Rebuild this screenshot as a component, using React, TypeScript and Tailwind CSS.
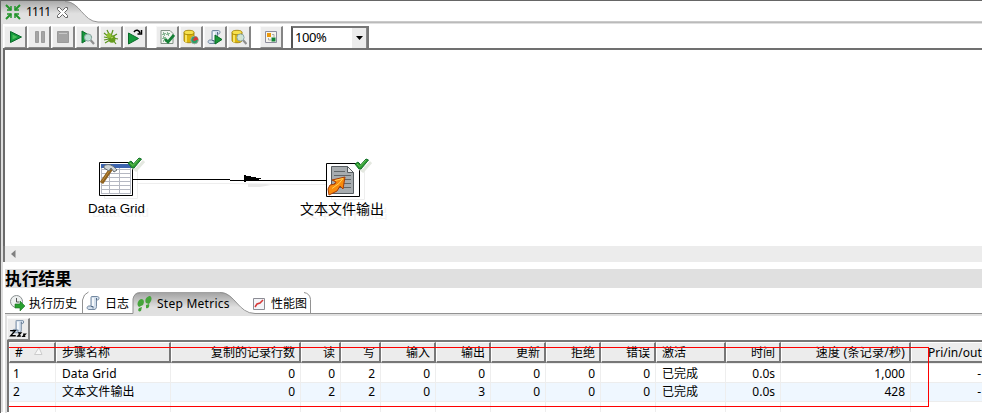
import React from "react";

const Play = () => <path d="M3 2v12l10-6z" fill="#159a3c" stroke="#0c6b2c" />;

const Lens = ({ x = 0, y = 0 }: { x?: number; y?: number }) => (
  <g transform={`translate(${x} ${y})`}>
    <path d="M11 11l3.500 4" stroke="#8f8f8f" strokeWidth="2.2" />
    <circle cx="8.500" cy="8.500" r="3.600" fill="#cfe9e6" fillOpacity=".9" stroke="#8ba5a2" />
  </g>
);

const Cylinder = () => (
  <g stroke="#9a7a00" strokeWidth=".8">
    <path d="M1 3.500v8c0 3 10 3 10 0v-8z" fill="#dcb60c" />
    <path d="M3 5.500v8" stroke="#fff080" strokeWidth="1.600" />
    <ellipse cx="6" cy="3.500" rx="5" ry="2.200" fill="#f7e04c" />
  </g>
);

const Scroll = () => (
  <g>
    <path d="M5.500 1.500h6c2 0 2 3.500 0 3.500h-1v6.500c0 2-1 3-2.500 3H3c-2.500 0-2.500-3.500 0-3.500h2V3q0-1.500.5-1.500z" fill="#d3dfec" stroke="#7388a0" />
    <path d="M10.500 5V3M5 11.500h2v2" stroke="#566c86" fill="none" />
    <path d="M7 3v8" stroke="#fff" strokeWidth="1.500" />
  </g>
);

function Icon({ children, size = 16, className = "" }: { children: React.ReactNode; size?: number; className?: string }) {
  return (
    <svg width={size} height={size} viewBox="0 0 16 16" fill="none" className={`shrink-0 ${className}`}>
      {children}
    </svg>
  );
}

function ToolButton({ children, className = "" }: { children: React.ReactNode; className?: string }) {
  return (
    <div
      className={`flex h-[22px] w-[23px] shrink-0 items-center justify-center border-r-2 border-b border-t border-l border-r-[#858585] border-b-[#8a8a8a] border-t-[#f8f8f8] border-l-[#f8f8f8] bg-[#ececec] ${className}`}
    >
      {children}
    </div>
  );
}

const Check = ({ className }: { className: string }) => (
  <svg width="18" height="15" viewBox="0 0 18 15" className={className}>
    <path d="M5 10l4 3 8-9" stroke="#e4e8e0" strokeWidth="3" fill="none" />
    <path d="M1 6l3-2 2.500 3L12 1l2.500 1L7 11H5z" fill="#2f9d32" stroke="#12702a" />
    <path d="M3 6l3 2.500L12 2" stroke="#68c454" fill="none" />
  </svg>
);

function Toolbar() {
  return (
    <div className="flex h-6 items-start gap-px pl-1 pt-[2px]">
      <ToolButton><Icon className="ml-px"><path d="M2.500 2.500v11l11-5.500z" fill="#159a3c" stroke="#0c6b2c" /><path d="M4.500 5.500v5l5-2.500z" fill="#4bbf5c" /></Icon></ToolButton>
      <ToolButton><Icon className="ml-px"><path d="M3.500 2.500h3v11h-3zM9.500 2.500h3v11h-3z" fill="#a4a4a4" stroke="#9c9c9c" /></Icon></ToolButton>
      <ToolButton><Icon><path d="M2.500 2.500h11v11h-11z" fill="#a4a4a4" stroke="#9a9a9a" /><path d="M4 4.500h8" stroke="#c8c8c8" /></Icon></ToolButton>
      <ToolButton><Icon><Play /><Lens x={.5} /></Icon></ToolButton>
      <ToolButton>
        <Icon>
          <path d="M7 7L4 1M8 7L10 1M6 8L1 4M9 8l5-3M6 9L1 8M10 9l5 1M7 11l-5 3M10 11l3 4M6 10l-5 1" stroke="#58911a" strokeWidth="1.200" />
          <ellipse cx="9" cy="10" rx="3.500" ry="3.800" fill="#659c1c" /><circle cx="6" cy="6.500" r="2.500" fill="#8fbe31" /><path d="M8 9l2-1" stroke="#c0dc68" />
        </Icon>
      </ToolButton>
      <ToolButton><Icon><path d="M1.500 4v11l10-5.500z" fill="#159a3c" stroke="#0c6b2c" /><path d="M7 3c2-3 5-2 6 1M14.500 1v4h-4" stroke="#000" strokeWidth="1.500" /></Icon></ToolButton>
      <ToolButton className="ml-[8px]">
        <Icon><path d="M2 1.500h9l3 3v10H2z" fill="#f1f5ef" stroke="#819184" /><path d="M4 4h2v2H4zM8 4h2v2H8zM4 8h2v2H4zM4 12h3" stroke="#27793c" strokeDasharray="1 1" /><path d="M6 10l3 3 6-7" stroke="#168036" strokeWidth="2.800" /></Icon>
      </ToolButton>
      <ToolButton><Icon><Cylinder /><circle cx="11.500" cy="11" r="3.800" fill="#2c9e68" stroke="#a0a79c" /><path d="M11.500 11V7.500a3.500 3.500 0 013.500 3.500z" fill="#da3838" /><circle cx="11.500" cy="10.500" r="1.500" fill="#da3838" /></Icon></ToolButton>
      <ToolButton><Icon><Scroll /><path d="M8 6v9l7-4.500z" fill="#1a9639" stroke="#096d25" /></Icon></ToolButton>
      <ToolButton><Icon><Cylinder /><Lens x={1} /></Icon></ToolButton>
      <ToolButton className="ml-[8px]">
        <Icon><path d="M2.500 2.500h11v11h-11z" fill="#f6f4ed" stroke="#8c8c9c" /><path d="M4 4h4v4H4z" fill="#eb980b" /><path d="M8.500 8.500h4v4h-4z" fill="#128335" /><path d="M9 5.500h2V8M5.500 9v2H8" stroke="#aaa" /></Icon>
      </ToolButton>
      <div className="ml-[7px] flex h-[22px] w-[78px] border-2 border-b-0 border-[#777] border-l-[#555] bg-white">
        <span className="w-[59px] pl-[2px] text-[13px] leading-[19px] tracking-[-0.4px]">100%</span>
        <span className="flex flex-1 items-center justify-center border-r border-[#888] bg-[#ececec]">
          <svg width="7" height="4"><path d="M0 0h7L3.500 4z" /></svg>
        </span>
      </div>
    </div>
  );
}

function Canvas() {
  return (
    <div className="relative ml-[3px] h-[198px] border-l-2 border-t-2 border-l-[#6b6b6b] border-t-[#707070] bg-white">
      <svg width="976" height="196" className="absolute left-px top-0">
        <g stroke="#eee" fill="none">
          <path d="M132 133.500h88l75 1h32" />
          <path d="M98.500 115.500h33v33h-33zM325.500 116.500h33v33h-33z" />
        </g>
        <path d="M242 134h18l5 1-11 2h-12z" fill="#e9e9e9" />
        <path d="M127 129.500h97M224 130.500h97" stroke="#000" shapeRendering="crispEdges" />
        <path d="M238 125h2v1h5v1h5v1h5v1h-3v1h-12v2h-2z" />
        <path d="M240 126h5v1h5v1h5v1h-2v1h-13z" />
        <g transform="translate(93 112)">
          <path d="M.5.500h33v33H.500z" fill="#fff" stroke="#000" />
          <path d="M2 2h30v4H2z" fill="#3b63ae" />
          <path d="M2 7.500h30M2 11.500h30M2 15.500h30M2 19.500h30M2 23.500h30M2 27.500h30M2 31.500h30M2.500 6v26M10.500 6v26M20.500 6v26M31.500 6v26" stroke="#b5b8c2" />
          <path d="M12 7L2.500 21" stroke="#8e6120" strokeWidth="4" /><path d="M11 8L3 19.500" stroke="#bd8b36" />
          <path d="M5 4c4-3 9-1 13 4l-3 2-3-4-2 3-5-3z" fill="#cfd4d6" stroke="#666d70" />
        </g>
        <g transform="translate(320 113)">
          <path d="M.5.500h33v33H.500z" fill="#fff" stroke="#000" />
          <path d="M5.500 3.500h16l6 6v21h-22z" fill="#a7acaf" stroke="#565c60" />
          <path d="M21.500 3.500v6h6z" fill="#e8eaea" stroke="#565c60" />
          <path d="M8 8.500h11M8 12.500h17M8 16.500h17M8 20.500h17M8 24.500h17" stroke="#626769" />
          <path d="M6 17l13-3-2 12-3-3-3 5-8 4-1-6 2-4 5-1 1-2z" fill="#f88b0d" stroke="#a83c05" />
          <path d="M9 17.500l8-2-4 5-7 5" stroke="#ffd253" fill="none" />
        </g>
      </svg>
      <Check className="absolute left-[122px] top-[107px]" />
      <Check className="absolute left-[349px] top-[108px]" />
      <div className="absolute left-[83px] top-[151px] font-['Liberation_Sans',sans-serif] text-[13.3px] leading-4 whitespace-nowrap [text-shadow:4px_4px_0_#f3f3f3]">Data Grid</div>
      <div className="absolute left-[295px] top-[151px] text-[14px] leading-4 whitespace-nowrap [text-shadow:4px_4px_0_#f3f3f3]">文本文件输出</div>
    </div>
  );
}

function ResultTabs() {
  return (
    <div className="relative ml-[5px] h-[28px] text-[12px] leading-[22px] whitespace-nowrap">
      <svg width="977" height="28" className="absolute inset-0">
        <defs><linearGradient id="tab" x2="0" y2="1"><stop stopColor="#a0a0a0" /><stop offset=".7" stopColor="#e0e0e0" /></linearGradient></defs>
        <path d="M0 25h977v3H0z" fill="#e1e1e1" />
        <path d="M128 26V11q1-7 7-7h80c15 0 18 22 35 22z" fill="url(#tab)" />
        <g fill="none" stroke="#929292"><path d="M0 25.500h128V11q1-6 7-6M77.500 25V12q1-6 6-8M215 4.500c15 0 18 21 35 21h727M299 4.500q6 1 6.500 7v14" /></g>
      </svg>
      <div className="relative flex h-full items-center pt-[3px]">
        <Icon className="ml-[5px] -mt-px"><circle cx="6.500" cy="6.500" r="6" fill="#edf0f0" stroke="#8a8f91" /><path d="M6.500 3v4H9" stroke="#555" /><path d="M5 9h5V6l5 5-5 5v-3H5z" fill="#28a02e" stroke="#207126" strokeWidth=".6" /></Icon>
        <span className="ml-[3px] w-[49px]">执行历史</span>
        <Icon className="ml-[8px] -mt-px"><Scroll /></Icon>
        <span className="ml-[3px] w-6">日志</span>
        <Icon className="ml-[8px]"><path d="M2 11c-3-2-1-7 2-8 4 0 3 4 2 6zM2 12l3-1-1 4c-2 1-4 0-2-3zM9 7c-2-3 1-7 4-7 3 2 1 6-1 8zM9 9l3-1c1 3-1 5-3 4z" fill="#45a43b" /></Icon>
        <span className="ml-[4px] w-[76px] tracking-[0.25px]">Step Metrics</span>
        <svg width="12" height="12" viewBox="0 0 12 12" className="ml-[20px]"><path d="M.5.500h11v11H.500z" fill="#f3f4f8" stroke="#8c8c94" /><path d="M2 9l2-3 3-1 3-3" stroke="#d63838" strokeWidth="1.500" fill="none" /></svg>
        <span className="ml-[6px]">性能图</span>
      </div>
    </div>
  );
}

const columns = [
  { title: "#", width: 47, left: true },
  { title: "步骤名称", width: 115, left: true },
  { title: "复制的记录行数", width: 130 },
  { title: "读", width: 40 },
  { title: "写", width: 40 },
  { title: "输入", width: 55 },
  { title: "输出", width: 55 },
  { title: "更新", width: 55 },
  { title: "拒绝", width: 55 },
  { title: "错误", width: 55 },
  { title: "激活", width: 70, left: true },
  { title: "时间", width: 55 },
  { title: "速度 (条记录/秒)", width: 130 },
  { title: "Pri/in/out", width: 71 },
];

const rows = [
  ["1", "Data Grid", "0", "0", "2", "0", "0", "0", "0", "0", "已完成", "0.0s", "1,000", "-"],
  ["2", "文本文件输出", "0", "2", "2", "0", "3", "0", "0", "0", "已完成", "0.0s", "428", "-"],
  ["", "", "", "", "", "", "", "", "", "", "", "", "", ""],
];

function headerPadding(index: number) {
  if (index === 13) return "pl-[16px]";
  if (index === 12) return "justify-end pr-[4px] tracking-[0.25px]";
  return columns[index].left ? "pl-[5px]" : "justify-end pr-[4px]";
}

function cellPadding(index: number) {
  if (index === 0) return "pl-[4px]";
  if (index === 13) return "pr-[1px] text-right";
  if (index === 1) return "pl-[6px] tracking-[0.1px]";
  return columns[index].left ? "pl-[6px]" : "pr-[5px] text-right";
}

function Metrics() {
  return (
    <div className="relative ml-[7px] h-[72px] w-[975px] overflow-hidden border-l-2 border-t-2 border-l-[#777] border-t-[#777] text-[12px] whitespace-nowrap">
      <div className="flex h-[21px] bg-[#ececec]">
        {columns.map((c, i) => (
          <div
            key={c.title}
            style={{ width: c.width }}
            className={`flex h-[21px] shrink-0 border-b-2 border-l border-t border-b-[#777] border-l-white border-t-white leading-[19px] ${i === 13 ? "" : "border-r-2 border-r-[#777]"} ${headerPadding(i)}`}
          >
            {c.title}
            {i === 0 && <svg width="9" height="8" className="ml-[11px] mt-[4px]"><path d="M.5 7.500L5 .500l3 7z" fill="#f8f8f8" stroke="#ccc" /></svg>}
          </div>
        ))}
      </div>
      {rows.map((row, r) => (
        <div key={r} className={`flex h-[19px] border-t border-[#ededed] ${r === 1 ? "bg-[#eff7ff] leading-[18px]" : "leading-[20px]"}`}>
          {row.map((value, i) => (
            <div key={i} style={{ width: columns[i].width }} className={`shrink-0 ${i === 13 ? "" : "border-r border-[#eee]"} ${cellPadding(i)}`}>
              {value}
            </div>
          ))}
        </div>
      ))}
      <div className="absolute left-[-1px] top-[5px] h-[60px] w-[921px] border border-[#f00]" />
    </div>
  );
}

export default function App() {
  return (
    <div className="h-[413px] w-[982px] overflow-hidden border-l border-t border-[#666] bg-white font-['Noto_Sans','Noto_Sans_CJK_SC',sans-serif] text-black">
      <div className="-ml-px -mt-px h-full w-[982px] border-l border-[#777]">
        <div className="-ml-px h-full border-l-[3px] border-[#dedede]">
          <div className="-ml-[3px] w-[982px]">
            <div className="relative h-6 border-t border-[#666] pl-[3px]">
              <svg width="982" height="23" className="absolute left-0 top-0">
                <defs><linearGradient id="top" x2="0" y2="1"><stop stopColor="#aaa" /><stop offset=".55" stopColor="#e0e0e0" /></linearGradient></defs>
                <path d="M1 22V0h64c15 0 18 21 33 21h884v2H1z" fill="url(#top)" />
                <path d="M65 .500c15 0 18 20 33 20.500h884" fill="none" stroke="#949494" />
              </svg>
              <div className="relative flex h-[22px] items-center text-[12px]">
                <Icon className="ml-[2px]"><path d="M1 1l5 5M15 1l-5 5M1 15l5-5M15 15l-5-5" stroke="#24952c" strokeWidth="2" /><path d="M2 6h4V2M10 2v4h4M2 10h4v4M10 14v-4h4" stroke="#24952c" strokeWidth="1.500" /></Icon>
                <span className="ml-[5px] w-[25px] tracking-[-0.8px]">1111</span>
                <svg width="11" height="11" viewBox="0 0 11 11" className="ml-[6px]"><path d="M.5.500h2l3 3 3-3h2v2l-3 3 3 3v2h-2l-3-3-3 3h-2v-2l3-3-3-3z" fill="#fff" stroke="#666" /></svg>
              </div>
            </div>
            <Toolbar />
            <Canvas />
            <div className="ml-[3px] h-4 border-l-2 border-[#777] bg-[#ececec] pl-[6px] pt-[4px]"><svg width="5" height="8"><path d="M4.500 0v8L0 4z" fill="#808080" /></svg></div>
            <div className="h-[7px]" />
            <div className="ml-[5px] h-[19px] bg-[#e0e0e0] text-[16.7px] font-bold leading-[19px]">执行结果</div>
            <ResultTabs />
            <div className="ml-[5px] h-[97px] border-l-2 border-[#e0e0e0]">
              <div className="h-[24px] pt-[2px]">
                <ToolButton>
                  <Icon size={18}><g transform="translate(2 -1) scale(.85)"><Scroll /></g><path d="M1 9.500h4.500L1.500 14H6M8 11.500h2.500L8 14.200h2.500M12.500 12.500h2l-2 2h2" stroke="#000" strokeWidth="1.200" /></Icon>
                </ToolButton>
              </div>
              <div className="-ml-[7px]"><Metrics /></div>
            </div>
          </div>
        </div>
      </div>
    </div>
  );
}
